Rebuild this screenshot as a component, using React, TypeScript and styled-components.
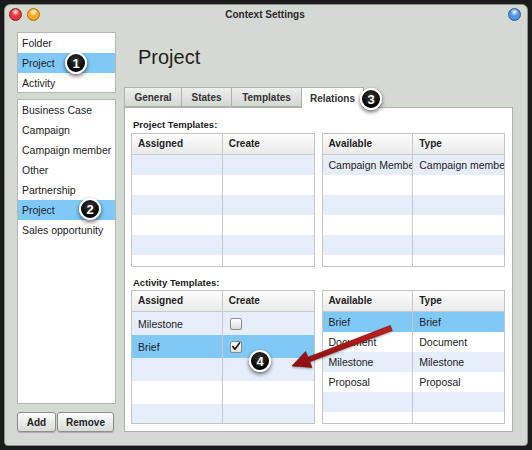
import styled, { createGlobalStyle } from "styled-components";

const GlobalStyle = createGlobalStyle`
  html, body {
    margin: 0;
    padding: 0;
    background: #1b1b1b;
  }
  body {
    font-family: "Liberation Sans", Arial, sans-serif;
    color: #222;
  }
`;

const SELECTED = "#80c9f7";
const STRIPE = "#e6edfb";

interface TableColumn {
  title: string;
}

interface TableRow {
  cells: (string | boolean | null)[];
}

interface TableProps {
  columns: TableColumn[];
  rows: TableRow[];
  rowHeight: number;
  selected?: number;
}

const DataTable: React.FC<TableProps> = ({ columns, rows, rowHeight, selected }) => {
  const filled = [...rows];
  while (filled.length < 8) filled.push({ cells: columns.map(() => null) });

  return (
    <Table>
      <HeaderRow>
        {columns.map((c) => (
          <HeaderCell key={c.title}>{c.title}</HeaderCell>
        ))}
      </HeaderRow>
      {filled.map((row, i) => (
        <Row key={i} $height={rowHeight} $bg={i === selected ? SELECTED : i % 2 === 0 ? STRIPE : "#fff"}>
          {row.cells.map((cell, j) => (
            <Cell key={j} $height={rowHeight}>
              {typeof cell === "boolean" ? <Checkbox checked={cell} /> : cell}
            </Cell>
          ))}
        </Row>
      ))}
    </Table>
  );
};

const Checkbox: React.FC<{ checked: boolean }> = ({ checked }) => (
  <CheckBox>
    {checked && (
      <svg width="11" height="11" viewBox="0 0 11 11">
        <path d="M2 5.5 L4.3 8.5 L9.5 1.5" fill="none" stroke="#111" strokeWidth="1.8" strokeLinecap="round" strokeLinejoin="round" />
      </svg>
    )}
  </CheckBox>
);

const App: React.FC = () => {
  return (
    <Page>
      <GlobalStyle />
      <Window>
        <TitleBar>
          <Lights>
            <Light $color="#e8353b" $edge="#9a1d22" />
            <Light $color="#f8ab22" $edge="#b06d0e" />
          </Lights>
          <Title>Context Settings</Title>
          <Lights $right>
            <Light $color="#4d93e6" $edge="#28589c" />
          </Lights>
        </TitleBar>
        <Body>
          <LeftCol>
            <TypeList>
              <ListItem>Folder</ListItem>
              <ListItem $selected>Project</ListItem>
              <ListItem>Activity</ListItem>
            </TypeList>
            <ItemList>
              <ListItem>Business Case</ListItem>
              <ListItem>Campaign</ListItem>
              <ListItem>Campaign member</ListItem>
              <ListItem>Other</ListItem>
              <ListItem>Partnership</ListItem>
              <ListItem $selected>Project</ListItem>
              <ListItem>Sales opportunity</ListItem>
            </ItemList>
            <ButtonRow>
              <Button $width={39}>Add</Button>
              <Button $width={57}>Remove</Button>
            </ButtonRow>
          </LeftCol>
          <RightCol>
            <Heading>Project</Heading>
            <Tabs>
              <Tab $width={58}>General</Tab>
              <Tab $width={51}>States</Tab>
              <Tab $width={71}>Templates</Tab>
              <Tab $width={63} $active>
                Relations
              </Tab>
            </Tabs>
            <Panel>
              <SectionLabel>Project Templates:</SectionLabel>
              <TablePair>
                <DataTable columns={[{ title: "Assigned" }, { title: "Create" }]} rows={[]} rowHeight={20} />
                <DataTable
                  columns={[{ title: "Available" }, { title: "Type" }]}
                  rows={[{ cells: ["Campaign Member", "Campaign member"] }]}
                  rowHeight={20}
                />
              </TablePair>
              <SectionLabel $gap>Activity Templates:</SectionLabel>
              <TablePair>
                <DataTable
                  columns={[{ title: "Assigned" }, { title: "Create" }]}
                  rows={[{ cells: ["Milestone", false] }, { cells: ["Brief", true] }]}
                  rowHeight={23}
                  selected={1}
                />
                <DataTable
                  columns={[{ title: "Available" }, { title: "Type" }]}
                  rows={[
                    { cells: ["Brief", "Brief"] },
                    { cells: ["Document", "Document"] },
                    { cells: ["Milestone", "Milestone"] },
                    { cells: ["Proposal", "Proposal"] },
                  ]}
                  rowHeight={20}
                  selected={0}
                />
              </TablePair>
            </Panel>
          </RightCol>
        </Body>
      </Window>

      <Arrow viewBox="0 0 532 450" width="532" height="450">
        <defs>
          <linearGradient id="arrowFill" x1="0" y1="0" x2="0" y2="1">
            <stop offset="0" stopColor="#c42020" />
            <stop offset="1" stopColor="#8a0e0e" />
          </linearGradient>
        </defs>
        <polygon
          points="292,366 312,367.5 309.7,361.8 392.2,330.6 390.2,325.6 307.9,357.2 305.6,351.5"
          fill="url(#arrowFill)"
          stroke="#7a0b0b"
          strokeWidth="0.6"
          strokeLinejoin="round"
        />
      </Arrow>

      <Badge $x={76} $y={63}>1</Badge>
      <Badge $x={90} $y={209}>2</Badge>
      <Badge $x={371} $y={99}>3</Badge>
      <Badge $x={260} $y={361}>4</Badge>
    </Page>
  );
};

export default App;

const Page = styled.div`
  position: relative;
  width: 532px;
  height: 450px;
  padding: 4px 4px 0 4px;
  box-sizing: border-box;
  overflow: hidden;
`;

const Window = styled.div`
  width: 524px;
  height: 442px;
  box-sizing: border-box;
  background: #d5d9d3;
  border: 1px solid #8e928c;
  border-radius: 6px 6px 4px 4px;
  display: flex;
  flex-direction: column;
`;

const TitleBar = styled.div`
  height: 19px;
  flex: none;
  display: flex;
  align-items: center;
`;

const Lights = styled.div<{ $right?: boolean }>`
  flex: 1;
  display: flex;
  gap: 5px;
  justify-content: ${(p) => (p.$right ? "flex-end" : "flex-start")};
  padding: ${(p) => (p.$right ? "0 6px 0 0" : "0 0 0 4px")};
`;

const Light = styled.span<{ $color: string; $edge: string }>`
  width: 13px;
  height: 13px;
  border-radius: 50%;
  box-sizing: border-box;
  border: 1px solid ${(p) => p.$edge};
  background: radial-gradient(circle at 50% 28%, #fff 0, ${(p) => p.$color} 40%, ${(p) => p.$color} 70%, ${(p) => p.$edge} 100%);
`;

const Title = styled.div`
  font-size: 10px;
  font-weight: bold;
  color: #2a2a2a;
`;

const Body = styled.div`
  flex: 1;
  display: flex;
  gap: 8px;
  padding: 8px 14px 13px 12px;
  min-height: 0;
`;

const LeftCol = styled.div`
  width: 99px;
  display: flex;
  flex-direction: column;
`;

const TypeList = styled.div`
  height: 61px;
  flex: none;
  box-sizing: border-box;
  background: #fff;
  border: 1px solid #b3b6b1;
  overflow: hidden;
`;

const ItemList = styled(TypeList)`
  height: auto;
  flex: 1;
  margin-top: 6px;
`;

const ListItem = styled.div<{ $selected?: boolean }>`
  height: 20px;
  line-height: 20px;
  padding-left: 4px;
  font-size: 10.5px;
  color: #222;
  white-space: nowrap;
  background: ${(p) => (p.$selected ? SELECTED : "transparent")};
`;

const ButtonRow = styled.div`
  margin-top: 8px;
  display: flex;
  gap: 1px;
`;

const Button = styled.button<{ $width: number }>`
  width: ${(p) => p.$width}px;
  height: 20px;
  padding: 0;
  border: 1px solid #8d8f8b;
  border-radius: 3px;
  background: linear-gradient(#fdfdfd, #d8dbd7);
  box-shadow: 0 1px 1px rgba(0, 0, 0, 0.2);
  font-family: "Liberation Sans", Arial, sans-serif;
  font-size: 10px;
  font-weight: bold;
  color: #222;
`;

const RightCol = styled.div`
  flex: 1;
  display: flex;
  flex-direction: column;
  min-width: 0;
`;

const Heading = styled.div`
  height: 55px;
  flex: none;
  box-sizing: border-box;
  padding: 15px 0 0 14px;
  font-size: 20px;
  line-height: 20px;
  color: #222;
`;

const Tabs = styled.div`
  height: 20px;
  flex: none;
  display: flex;
  align-items: flex-end;
`;

const Tab = styled.div<{ $width: number; $active?: boolean }>`
  width: ${(p) => p.$width}px;
  height: ${(p) => (p.$active ? 21 : 20)}px;
  margin-left: -1px;
  margin-bottom: ${(p) => (p.$active ? -1 : 0)}px;
  box-sizing: border-box;
  border: 1px solid #aeb2ad;
  border-bottom: ${(p) => (p.$active ? "none" : "1px solid #aeb2ad")};
  background: ${(p) => (p.$active ? "#fff" : "linear-gradient(#eef0ed, #d3d7d2)")};
  position: relative;
  z-index: ${(p) => (p.$active ? 2 : 0)};
  display: flex;
  align-items: center;
  justify-content: center;
  font-size: 10px;
  font-weight: bold;
  color: #333;
  &:first-child {
    margin-left: 0;
  }
`;

const Panel = styled.div`
  flex: 1;
  background: #fff;
  border: 1px solid #aeb2ad;
  padding: 8px 7px 7px 6px;
  display: flex;
  flex-direction: column;
  position: relative;
  z-index: 1;
`;

const SectionLabel = styled.div<{ $gap?: boolean }>`
  height: ${(p) => (p.$gap ? 15 : 17)}px;
  line-height: ${(p) => (p.$gap ? 15 : 17)}px;
  margin-top: ${(p) => (p.$gap ? 8 : 0)}px;
  padding-left: 2px;
  font-size: 9.5px;
  font-weight: bold;
  color: #222;
`;

const TablePair = styled.div`
  display: grid;
  grid-template-columns: 1fr 1fr;
  gap: 7px;
`;

const Table = styled.div`
  height: 134px;
  box-sizing: border-box;
  border: 1px solid #c3c5c3;
  background: #fff;
  overflow: hidden;
`;

const HeaderRow = styled.div`
  display: grid;
  grid-template-columns: 1fr 1fr;
  height: 20px;
  background: linear-gradient(#fdfdfd, #e9eaea);
  border-bottom: 1px solid #cacaca;
`;

const HeaderCell = styled.div`
  padding-left: 6px;
  line-height: 20px;
  font-size: 10px;
  font-weight: bold;
  color: #222;
  &:first-child {
    border-right: 1px solid #c8c8c8;
  }
`;

const Row = styled.div<{ $height: number; $bg: string }>`
  display: grid;
  grid-template-columns: 1fr 1fr;
  height: ${(p) => p.$height}px;
  background: ${(p) => p.$bg};
`;

const Cell = styled.div<{ $height: number }>`
  display: flex;
  align-items: center;
  padding-left: 6px;
  height: ${(p) => p.$height}px;
  font-size: 10.5px;
  color: #222;
  white-space: nowrap;
  overflow: hidden;
  &:first-child {
    border-right: 1px solid #c8c8c8;
  }
`;

const CheckBox = styled.span`
  width: 12px;
  height: 12px;
  margin-left: 1px;
  box-sizing: border-box;
  border: 1px solid #8a8c8a;
  border-radius: 2px;
  background: linear-gradient(#ffffff, #dcdedc);
  display: flex;
  align-items: center;
  justify-content: center;
`;

const Arrow = styled.svg`
  position: absolute;
  left: 0;
  top: 0;
  pointer-events: none;
  filter: drop-shadow(0 1px 1px rgba(0, 0, 0, 0.35));
  z-index: 5;
`;

const Badge = styled.div<{ $x: number; $y: number }>`
  position: absolute;
  left: ${(p) => p.$x - 11}px;
  top: ${(p) => p.$y - 11}px;
  width: 22px;
  height: 22px;
  box-sizing: border-box;
  border-radius: 50%;
  border: 2px solid #fff;
  background: radial-gradient(circle at 50% 35%, #3a3a3a, #000 70%);
  box-shadow: 0 2px 4px rgba(0, 0, 0, 0.6);
  color: #fff;
  font-size: 13px;
  font-weight: bold;
  display: flex;
  align-items: center;
  justify-content: center;
  z-index: 6;
`;
